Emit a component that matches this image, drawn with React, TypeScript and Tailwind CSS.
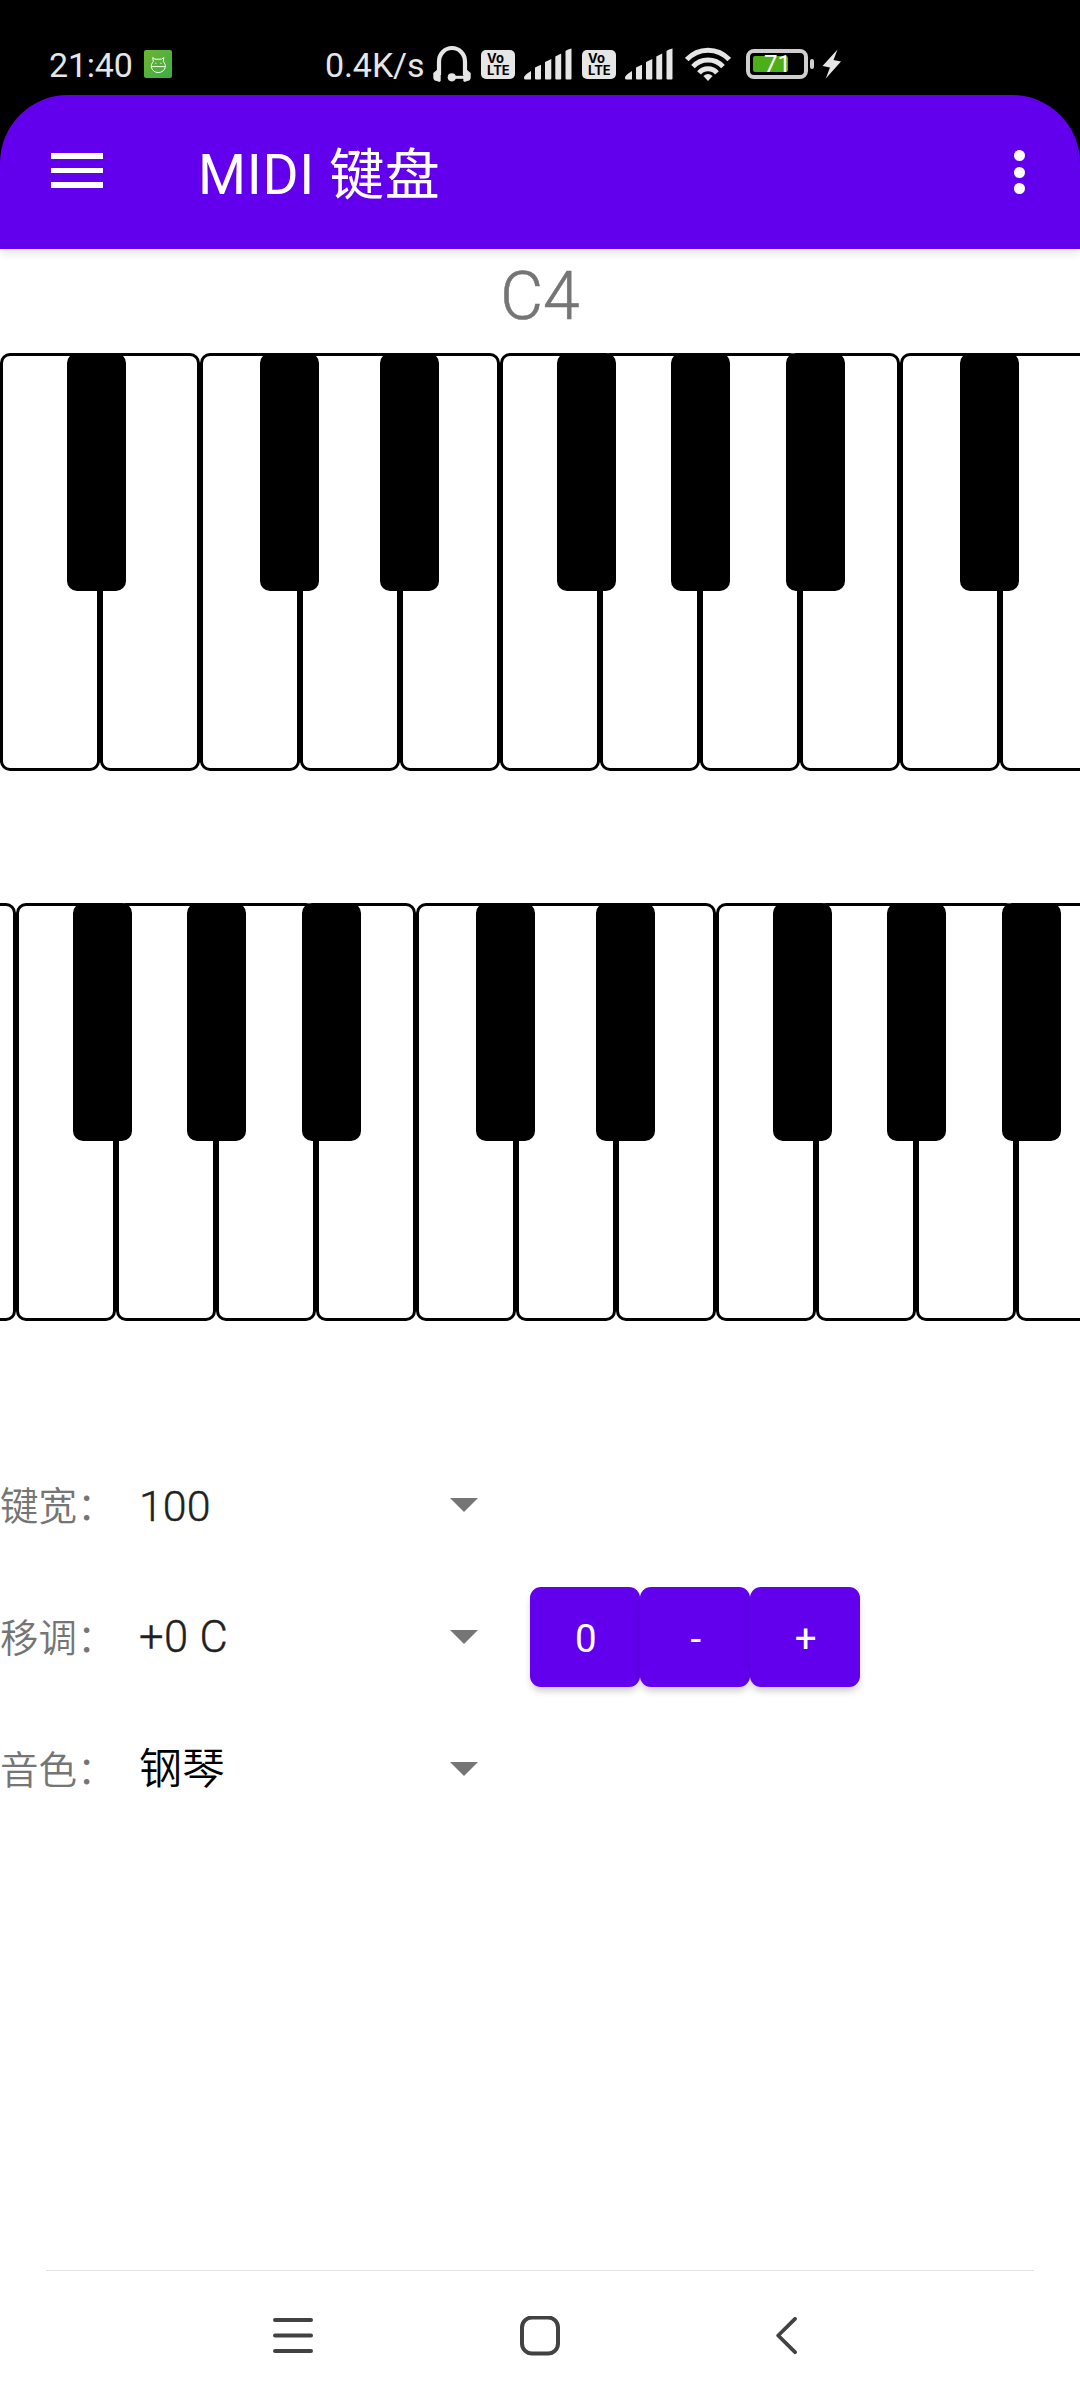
import React from "react";

const FONT = "font-[Roboto,'Noto_Sans_CJK_SC',sans-serif]";

function AppBadge() {
  return (
    <svg className="ml-[11px] h-7 w-7 shrink-0" viewBox="0 0 28 28" fill="none">
      <defs>
        <linearGradient id="badge" x1="0" y1="0" x2="1" y2="1">
          <stop offset="0" stopColor="#6cb52d" />
          <stop offset="1" stopColor="#3dac49" />
        </linearGradient>
      </defs>
      <rect width="28" height="28" rx="2" fill="url(#badge)" />
      <path
        d="M9.3 11.5 L8.7 7.5 L11 9.2 H17.5 L19.8 7.5 L19.3 11.5 C21 13.5 21.5 15 21.3 16.8 C20.8 20 18 22.6 14.3 22.6 C10.6 22.6 7.8 20 7.3 16.8 C7.2 15 7.7 13.3 9.3 11.5 Z M7.5 16.6 H21.2 M11.3 13.3 H12.4 M16.4 13.3 H17.5"
        stroke="#f4fff0"
        strokeWidth="1"
      />
    </svg>
  );
}

function Headset() {
  return (
    <svg className="ml-[8px] h-[38px] w-[38px] shrink-0" viewBox="0 0 38 38" fill="none">
      <path d="M6 30 V16.5 A13 13.5 0 0 1 32 16.5 V30" stroke="#e6e6e6" strokeWidth="4.2" />
      <path d="M7.7 24.5 H4.5 L0.3 28 V33 Q0.8 36 4 36 L6.2 37 L7.7 36 Z" fill="#e6e6e6" />
      <path d="M30.3 24.5 H33.5 L37.7 28 V33 Q37.2 36 34 36 L31.8 37 L30.3 36 Z" fill="#e6e6e6" />
      <path d="M19 32.3 H31" stroke="#e6e6e6" strokeWidth="3" />
      <circle cx="18.8" cy="32.3" r="4.1" fill="#e6e6e6" />
    </svg>
  );
}

function VoLte() {
  return (
    <div className="ml-[10px] flex h-[29px] w-[34px] shrink-0 flex-col justify-center rounded-[5px] bg-[#e6e6e6] pl-[6px] font-[Inter,sans-serif] text-[13px] leading-[12px] font-bold text-black">
      <span>Vo</span>
      <span>LTE</span>
    </div>
  );
}

function Signal() {
  return (
    <svg className="ml-[9px] h-8 w-12 shrink-0" viewBox="0 0 48 32" fill="#e6e6e6">
      <path d="M0 29.5 Q0 27 7 23 V31 Q7 31.5 6 31.5 H1.5 Q0 31.5 0 30 Z" />
      <path d="M11 19.5 L17 16.8 V30.5 Q17 31.5 16 31.5 H12 Q11 31.5 11 30.5 Z" />
      <path d="M21 14 L27.3 11 V30.5 Q27.3 31.5 26.3 31.5 H22 Q21 31.5 21 30.5 Z" />
      <path d="M31.3 8.5 L37.2 5.6 V30.5 Q37.2 31.5 36.2 31.5 H32.3 Q31.3 31.5 31.3 30.5 Z" />
      <path d="M41.5 3.5 Q41.5 2 47.5 0.5 V30.5 Q47.5 31.5 46.5 31.5 H42.5 Q41.5 31.5 41.5 30.5 Z" />
    </svg>
  );
}

function Wifi() {
  return (
    <svg className="ml-[12px] h-[34px] w-[46px] shrink-0" viewBox="0 0 46 34" fill="none">
      <g stroke="#e6e6e6" strokeWidth="5">
        <path d="M1.8 12.6 A28.5 28.5 0 0 1 44.2 12.6" />
        <path d="M8 19.6 A20.3 20.3 0 0 1 38 19.6" />
        <path d="M14 25.8 A12 12 0 0 1 32 25.8" />
      </g>
      <path d="M23 34 L18.4 29 Q23 25.2 27.6 29 Z" fill="#e6e6e6" />
    </svg>
  );
}

function Battery() {
  return (
    <div className="ml-[15px] flex shrink-0 items-center">
      <div className="flex h-[30px] w-[62px] items-center rounded-[8px] border-4 border-[#cfcfcf] p-[3px]">
        <div className="relative h-4 w-[35px] rounded-[2px] bg-[#4caf17]">
          <span className="absolute top-0 left-[11px] text-[24px] leading-[17px] font-normal text-white">71</span>
        </div>
      </div>
      <div className="ml-[2px] h-[10px] w-1 rounded-[2px] bg-[#cfcfcf]" />
    </div>
  );
}

function Bolt() {
  return (
    <svg className="ml-2 h-[30px] w-5 shrink-0" viewBox="0 0 20 30" fill="#e6e6e6">
      <path d="M15.5 0.5 L0.5 17 L8 18.5 L3.8 29.5 L19 12.5 L11.5 11 Z" />
    </svg>
  );
}

function StatusBar() {
  return (
    <div className="flex h-[95px] items-center bg-black pt-[33px] pl-[49px] text-[34px] text-[#e6e6e6]">
      <span className="w-[84px] pt-px leading-10 tracking-[-0.2px]">21:40</span>
      <AppBadge />
      <span className="ml-[153px] w-[100px] pt-px leading-10 tracking-[-0.1px]">0.4K/s</span>
      <div className="flex items-center">
        <Headset />
        <VoLte />
        <Signal />
        <VoLte />
        <Signal />
        <Wifi />
        <Battery />
        <Bolt />
      </div>
    </div>
  );
}

function AppBar() {
  return (
    <div className="bg-[linear-gradient(#000_75px,#fff_75px)]">
      <header className="flex h-[154px] items-start rounded-t-[68px] bg-[#6200ee] pl-[51px] shadow-[0_4px_10px_rgba(0,0,0,0.12)]">
        <div className="mt-[58px] flex w-[52px] flex-col gap-[9px]">
          <div className="h-[5.5px] bg-white" />
          <div className="h-[5.5px] bg-white" />
          <div className="h-[5.5px] bg-white" />
        </div>
        <h1 className="mt-[48px] ml-[95px] text-[55px] leading-[64px] font-normal tracking-[0.7px] text-white">
          MIDI 键盘
        </h1>
        <div className="mt-[55px] mr-[55px] ml-auto flex flex-col gap-[5.5px]">
          <div className="h-[11px] w-[11px] rounded-full bg-white" />
          <div className="h-[11px] w-[11px] rounded-full bg-white" />
          <div className="h-[11px] w-[11px] rounded-full bg-white" />
        </div>
      </header>
    </div>
  );
}

function Keyboard({ shift, blacks }: { shift: number; blacks: number[] }) {
  return (
    <div className="relative h-[418px] overflow-hidden">
      <div className="flex h-full" style={{ marginLeft: shift }}>
        {Array.from({ length: 12 }, (_, i) => (
          <div key={i} className="h-full w-[100px] shrink-0 rounded-[10px] border-[3px] border-black bg-white" />
        ))}
      </div>
      {blacks.map((left) => (
        <div key={left} className="absolute top-0 h-[238px] w-[59px] rounded-[10px] bg-black" style={{ left }} />
      ))}
    </div>
  );
}

function Setting({
  label,
  value,
  valueClass,
  children,
}: {
  label: string;
  value: string;
  valueClass: string;
  children?: React.ReactNode;
}) {
  return (
    <div className="flex h-[132px] items-center">
      <span className="w-[139px] pt-[3px] text-[38.5px] leading-[56px] font-[350] whitespace-nowrap text-[#757575]">
        {label}
      </span>
      <div className="flex w-[339px] items-center justify-between">
        <span className={valueClass}>{value}</span>
        <svg className="mb-px h-[14px] w-[28px]" viewBox="0 0 28 14">
          <path d="M0 0 H28 L14 14 Z" fill="#757575" />
        </svg>
      </div>
      {children}
    </div>
  );
}

function NavBar() {
  return (
    <nav className="mx-[46px] flex h-[130px] items-center border-t border-[#e3e3e3] pl-[227px]">
      <svg className="h-[36px] w-[40px]" viewBox="0 0 40 36" stroke="#424242" strokeWidth="4" strokeLinecap="round">
        <path d="M2 2 H38 M2 17.5 H38 M2 33 H38" />
      </svg>
      <svg className="ml-[207px] h-10 w-10" viewBox="0 0 40 40" fill="none" stroke="#424242" strokeWidth="4">
        <rect x="2" y="1.5" width="36" height="36" rx="10" />
      </svg>
      <svg
        className="ml-[216px] h-[38px] w-[21px]"
        viewBox="0 0 21 38"
        fill="none"
        stroke="#424242"
        strokeWidth="3.8"
        strokeLinecap="round"
        strokeLinejoin="round"
      >
        <path d="M19 1.9 L2.2 18.5 L19 35.2" />
      </svg>
    </nav>
  );
}

export default function App() {
  return (
    <div className={`flex h-[2400px] w-[1080px] flex-col overflow-hidden bg-white ${FONT}`}>
      <StatusBar />
      <AppBar />
      <div className="flex h-[104px] shrink-0 justify-center pt-[9px] text-[66px] leading-[77px] font-[350] text-[#757575] [-webkit-text-stroke:0.6px_#757575]">
        C4
      </div>
      <Keyboard shift={0} blacks={[67, 260, 380, 557, 671, 786, 960]} />
      <div className="mt-[132px]">
        <Keyboard shift={-84} blacks={[73, 187, 302, 476, 596, 773, 887, 1002]} />
      </div>
      <div className="mt-[118px]">
        <Setting
          label="键宽："
          value="100"
          valueClass="pt-px text-[43px] leading-[52px] font-[350] text-[#212121] [-webkit-text-stroke:0.4px_#212121]"
        />
        <Setting
          label="移调："
          value="+0 C"
          valueClass="pt-px text-[43.5px] leading-[52px] font-[350] tracking-[0.4px] text-[#212121] [-webkit-text-stroke:0.4px_#212121]"
        >
          <div className="ml-[52px] flex">
            {["0", "-", "+"].map((t) => (
              <button
                key={t}
                className="h-[100px] w-[110px] rounded-[11px] bg-[#6200ee] pt-[2px] pl-[2px] text-[38.5px] leading-[45px] tracking-[0.6px] text-white shadow-[0_5px_7px_-1px_rgba(0,0,0,0.2)]"
              >
                {t}
              </button>
            ))}
          </div>
        </Setting>
        <Setting label="音色：" value="钢琴" valueClass="text-[43px] leading-[64px] font-[350] text-black" />
      </div>
      <div className="grow" />
      <NavBar />
    </div>
  );
}
